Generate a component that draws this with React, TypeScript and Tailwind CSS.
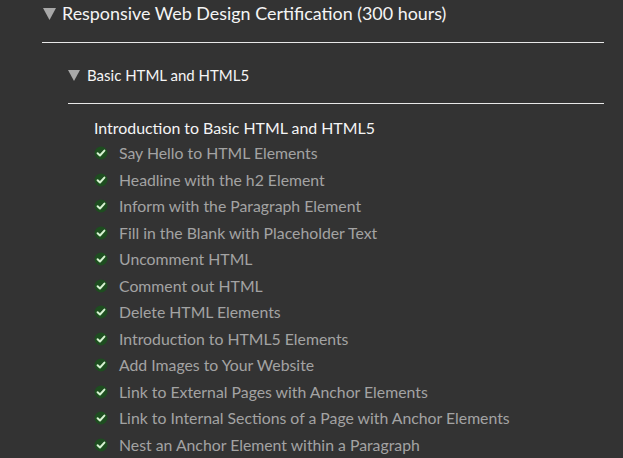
import React from 'react';

const lessons = [
  'Say Hello to HTML Elements',
  'Headline with the h2 Element',
  'Inform with the Paragraph Element',
  'Fill in the Blank with Placeholder Text',
  'Uncomment HTML',
  'Comment out HTML',
  'Delete HTML Elements',
  'Introduction to HTML5 Elements',
  'Add Images to Your Website',
  'Link to External Pages with Anchor Elements',
  'Link to Internal Sections of a Page with Anchor Elements',
  'Nest an Anchor Element within a Paragraph',
];

function Caret({ size }: { size: number }) {
  return (
    <svg width={size} height={size} viewBox="0 0 12 12" className="shrink-0">
      <polygon points="0,1 12,1 6,12" fill="#a8a8a8" />
    </svg>
  );
}

function Check() {
  return (
    <svg width="14" height="14" viewBox="0 0 14 14" className="shrink-0">
      <circle cx="7" cy="7" r="6.5" fill="#1e4d20" />
      <path d="M3.6 7.2 L6 9.5 L10.4 4.6" stroke="#d7f2d2" strokeWidth="2" fill="none" strokeLinecap="round" strokeLinejoin="round" />
    </svg>
  );
}

export default function App() {
  return (
    <main className="min-h-screen w-[623px] h-[458px] overflow-hidden bg-[#333333] text-white" style={{ fontFamily: 'Lato, sans-serif' }}>
      <div className="pl-[42px] pr-[19px]">
        <div className="flex items-center gap-[6px] h-[26px] pl-px">
          <Caret size={13} />
          <span className="text-[17.9px] text-[#f5f5f5]">Responsive Web Design Certification (300 hours)</span>
        </div>
        <div className="mt-[16px] h-px bg-[#e8e8e8]" />
        <div className="pl-[26px]">
          <div className="flex items-center gap-[7px] h-[24px] mt-[20px]">
            <Caret size={12} />
            <span className="text-[15px] text-[#f5f5f5]">Basic HTML and HTML5</span>
          </div>
          <div className="mt-[16px] h-px bg-[#e8e8e8]" />
          <div className="pl-[26px] pt-[11px]">
            <div className="h-[25px] flex items-center text-[15.9px] text-[#f5f5f5]">Introduction to Basic HTML and HTML5</div>
            <ul>
              {lessons.map((l) => (
                <li key={l} className="h-[26.5px] flex items-center gap-[11px]">
                  <Check />
                  <span className="text-[15.8px] text-[#a3a3a3]">{l}</span>
                </li>
              ))}
            </ul>
          </div>
        </div>
      </div>
    </main>
  );
}
